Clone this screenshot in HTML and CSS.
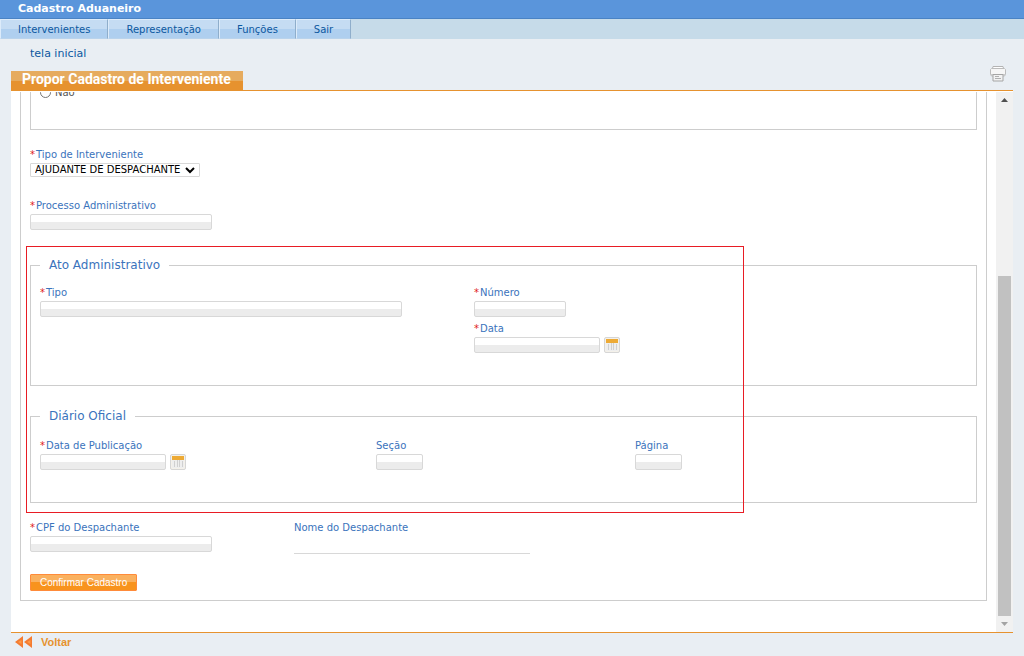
FILE: index.html
```html
<!DOCTYPE html>
<html lang="pt-BR">
<head>
<meta charset="utf-8">
<title>Cadastro Aduaneiro</title>
<link rel="stylesheet" href="styles.css">
</head>
<body>
<header class="system-bar">Cadastro Aduaneiro</header>
<nav class="menu">
  <a class="menu-item" href="#">Intervenientes</a>
  <a class="menu-item" href="#">Representação</a>
  <a class="menu-item" href="#">Funções</a>
  <a class="menu-item" href="#">Sair</a>
</nav>
<div class="crumb"><a href="#">tela inicial</a></div>
<main class="page">
  <div class="heading">
    <h1 class="heading-tab">Propor Cadastro de Interveniente</h1>
    <button class="icon-button print" type="button" aria-label="Imprimir">
      <svg width="16" height="17" viewBox="0 0 16 17">
        <path d="M3 1.500h10l.5 2H2.500z" fill="#fff" stroke="#b4b4b4"/>
        <path d="M1.500 3.500h13l1 1v5l-1 1.500h-13L.5 9.500v-5z" fill="#f6f6f6" stroke="#bcbcbc"/>
        <path d="M1 9.500h14" stroke="#ccc"/>
        <path d="M3 9.500h10v6.500H3z" fill="#f2f2f2" stroke="#a5a5a5"/>
        <path d="M5 11.500h4M5 13.500h6" stroke="#b0b0b0"/>
      </svg>
    </button>
  </div>
  <div class="viewport">
    <form class="scroll-content">
      <div class="form-box">
        <div class="group group-cut">
          <div class="radio-row"><input class="radio" type="radio" id="nao" name="opcao"><label class="label" for="nao">Não</label></div>
        </div>
        <div class="field">
          <label class="label" for="tipoInt"><span class="req">*</span>Tipo de Interveniente</label>
          <div class="select-wrap">
            <select class="select" id="tipoInt"><option>AJUDANTE DE DESPACHANTE</option></select>
            <svg class="chevron" width="10" height="7" viewBox="0 0 10 7"><path d="M1 1l4 4 4-4" fill="none" stroke="#000" stroke-width="2"/></svg>
          </div>
        </div>
        <div class="field field-next">
          <label class="label" for="proc"><span class="req">*</span>Processo Administrativo</label>
          <input class="input w-medium" id="proc" type="text">
        </div>
        <fieldset class="group group-act">
          <legend class="legend">Ato Administrativo</legend>
          <div class="cols cols-act">
            <div class="field">
              <label class="label" for="tipo"><span class="req">*</span>Tipo</label>
              <input class="input w-long" id="tipo" type="text">
            </div>
            <div class="stack">
              <div class="field">
                <label class="label" for="numero"><span class="req">*</span>Número</label>
                <input class="input w-number" id="numero" type="text">
              </div>
              <div class="field">
                <label class="label" for="data"><span class="req">*</span>Data</label>
                <div class="date">
                  <input class="input w-date" id="data" type="text">
                  <button class="icon-button calendar" type="button" aria-label="Calendário"><svg width="12" height="12" viewBox="0 0 12 12"><path d="M0 0h12v4H0z" fill="#edaa35"/><path d="M0 4h12v8H0z" fill="#eee"/><path d="M2.500 5v6M5.500 4v7M7.500 4v7M10.500 5v6" stroke="#d0d0d0"/></svg></button>
                </div>
              </div>
            </div>
          </div>
        </fieldset>
        <fieldset class="group group-gazette">
          <legend class="legend">Diário Oficial</legend>
          <div class="cols cols-gazette">
            <div class="field">
              <label class="label" for="dataPub"><span class="req">*</span>Data de Publicação</label>
              <div class="date">
                <input class="input w-date" id="dataPub" type="text">
                <button class="icon-button calendar" type="button" aria-label="Calendário"><svg width="12" height="12" viewBox="0 0 12 12"><path d="M0 0h12v4H0z" fill="#edaa35"/><path d="M0 4h12v8H0z" fill="#eee"/><path d="M2.500 5v6M5.500 4v7M7.500 4v7M10.500 5v6" stroke="#d0d0d0"/></svg></button>
              </div>
            </div>
            <div class="field">
              <label class="label" for="secao">Seção</label>
              <input class="input w-short" id="secao" type="text">
            </div>
            <div class="field">
              <label class="label" for="pagina">Página</label>
              <input class="input w-short" id="pagina" type="text">
            </div>
          </div>
        </fieldset>
        <div class="cols cols-broker">
          <div class="field">
            <label class="label" for="cpf"><span class="req">*</span>CPF do Despachante</label>
            <input class="input w-medium" id="cpf" type="text">
          </div>
          <div class="field">
            <label class="label" for="nome">Nome do Despachante</label>
            <input class="input-line" id="nome" type="text" readonly>
          </div>
        </div>
        <button class="submit" type="button">Confirmar Cadastro</button>
        <div class="highlight"></div>
      </div>
    </form>
    <div class="scrollbar">
      <svg width="7" height="4" viewBox="0 0 7 4"><path d="M0 4l3.500-4L7 4z" fill="#505050"/></svg>
      <div class="track"><div class="thumb"></div></div>
      <svg width="7" height="4" viewBox="0 0 7 4"><path d="M0 0h7L3.500 4z" fill="#a3a3a3"/></svg>
    </div>
  </div>
</main>
<footer class="footer">
  <a class="back" href="#">
    <svg width="18" height="12" viewBox="0 0 18 12"><path d="M8 0v12L0 6zM17 0v12L9 6z" fill="#f47b30"/><path d="M6.500 4v4L3 6zM15.500 4v4L12 6z" fill="#ff9a45"/></svg>
    <span>Voltar</span>
  </a>
</footer>
</body>
</html>
```
FILE: styles.css
```css
* { box-sizing: border-box; }
body {
  margin: 0;
  height: 100vh;
  display: flex;
  flex-direction: column;
  overflow: hidden;
  background: #e9eef3;
  font: 10px/14px Verdana, "DejaVu Sans", sans-serif;
  color: #3a73bc;
}
a { color: inherit; text-decoration: none; }
.system-bar {
  height: 19px;
  padding-left: 18px;
  background: #5a95db;
  border-bottom: 1px solid #4a83c4;
  color: #fff;
  font-size: 11px;
  font-weight: bold;
  line-height: 18px;
}
.menu {
  display: flex;
  height: 20px;
  background: #c6dbe9;
  color: #0c58a0;
  line-height: 19px;
}
.menu-item {
  padding: 0 17px;
  border-top: 1px solid #dcebfa;
  border-left: 1px solid #dcebfa;
  border-right: 1px solid #8faecb;
  border-bottom: 1px solid #b9d3ec;
  background: linear-gradient(#c5dcf3 50%, #afcfef 50%);
}
.crumb {
  height: 32px;
  padding: 8px 0 0 30px;
  color: #0c58a0;
  font-size: 11px;
}
.page {
  flex: 1;
  min-height: 0;
  margin: 0 11px;
  display: flex;
  flex-direction: column;
}
.heading {
  display: flex;
  justify-content: space-between;
  height: 20px;
  border-bottom: 1px solid #e6922f;
}
.heading-tab {
  margin: 0;
  padding: 0 12px 0 11px;
  background: linear-gradient(#e6ab5e 55%, #e6922f 55%);
  color: #fff;
  font: bold 14px/17px Roboto, Arial, sans-serif;
}
.icon-button { padding: 0; border: 0; background: none; display: flex; }
.print { height: 17px; margin: -6px 7px 0 0; }
.viewport {
  flex: 1;
  min-height: 0;
  display: flex;
  overflow: hidden;
  background: #fff;
  border-top: 1px solid #fff;
}
.scroll-content { flex: 1; overflow: hidden; padding: 0 9px; }
.form-box {
  position: relative;
  padding: 0 9px 9px;
  border: 1px solid #cdcdcd;
  border-top: 0;
}
.group {
  margin: 0;
  min-width: 0;
  padding: 0 9px 32px;
  border: 1px solid #cdcdcd;
}
.group-cut { margin-bottom: 17px; padding-bottom: 29px; border-top: 0; }
.radio-row { display: flex; align-items: center; gap: 4px; margin-top: -7px; }
.radio { width: 11px; height: 11px; margin: 0; }
.group-cut .label { color: #555; }
.label { padding-top: 1px; }
.legend {
  margin: 0;
  padding: 0 9px;
  font-size: 12px;
  line-height: 16px;
}
.field { display: flex; flex-direction: column; align-items: flex-start; gap: 1px; }
.field-next { margin-top: 21px; }
.req { margin-right: 1px; color: #e02020; }
.stack { display: flex; flex-direction: column; gap: 4px; }
.select-wrap { position: relative; display: flex; }
.select {
  height: 14px;
  width: 170px;
  padding: 0 0 0 4px;
  appearance: none;
  border: 1px solid #d8d8d8;
  border-radius: 1px;
  background: #fff;
  color: #000;
  font: 10px/12px Verdana, "DejaVu Sans", sans-serif;
}
.chevron { position: absolute; right: 5px; top: 4px; pointer-events: none; }
.input {
  height: 16px;
  padding: 0 3px;
  border: 1px solid #d8d8d8;
  border-radius: 2px;
  background: linear-gradient(#fff 50%, #ececec 50%);
  font: inherit;
}
.w-medium { width: 182px; }
.w-long { width: 362px; }
.w-number { width: 92px; }
.w-date { width: 126px; }
.w-short { width: 47px; }
.date { display: flex; gap: 4px; }
.calendar {
  width: 16px;
  height: 16px;
  align-items: center;
  justify-content: center;
  border: 1px solid #d6d6d6;
  border-radius: 2px;
  background: #f4f1ea;
}
.group-act { margin-top: 27px; padding-top: 12px; }
.group-gazette { margin-top: 22px; padding-top: 14px; }
.cols { display: grid; }
.cols-act { grid-template-columns: 434px 1fr; }
.cols-gazette { grid-template-columns: 336px 259px 1fr; }
.cols-broker { grid-template-columns: 264px 1fr; margin-top: 17px; }
.input-line {
  width: 236px;
  height: 18px;
  border: 0;
  border-bottom: 1px solid #d8d8d8;
  font: inherit;
}
.submit {
  display: block;
  height: 17px;
  margin-top: 20px;
  padding: 0 9px;
  border: 1px solid #ff8b3a;
  border-radius: 1px;
  background: linear-gradient(#fab15f 50%, #f8931d 50%);
  color: #fff;
  font: 10px/15px "Liberation Sans", Arial, sans-serif;
}
.highlight {
  position: absolute;
  left: 5px;
  top: 161px;
  width: 718px;
  height: 267px;
  border: 1px solid #e81c24;
  pointer-events: none;
}
.scrollbar {
  width: 17px;
  padding: 6px 0;
  display: flex;
  flex-direction: column;
  align-items: center;
  gap: 6px;
  background: #f1f1f1;
}
.track { flex: 1; width: 13px; display: flex; flex-direction: column; justify-content: flex-end; }
.thumb { height: 67%; background: #c1c1c1; }
.footer {
  height: 24px;
  margin: 0 11px;
  padding: 2px 4px 0;
  border-top: 1px solid #e6922f;
  color: #e6922f;
  font: bold 11px/14px "Liberation Sans", Arial, sans-serif;
}
.back { display: inline-flex; align-items: center; gap: 8px; }
```
